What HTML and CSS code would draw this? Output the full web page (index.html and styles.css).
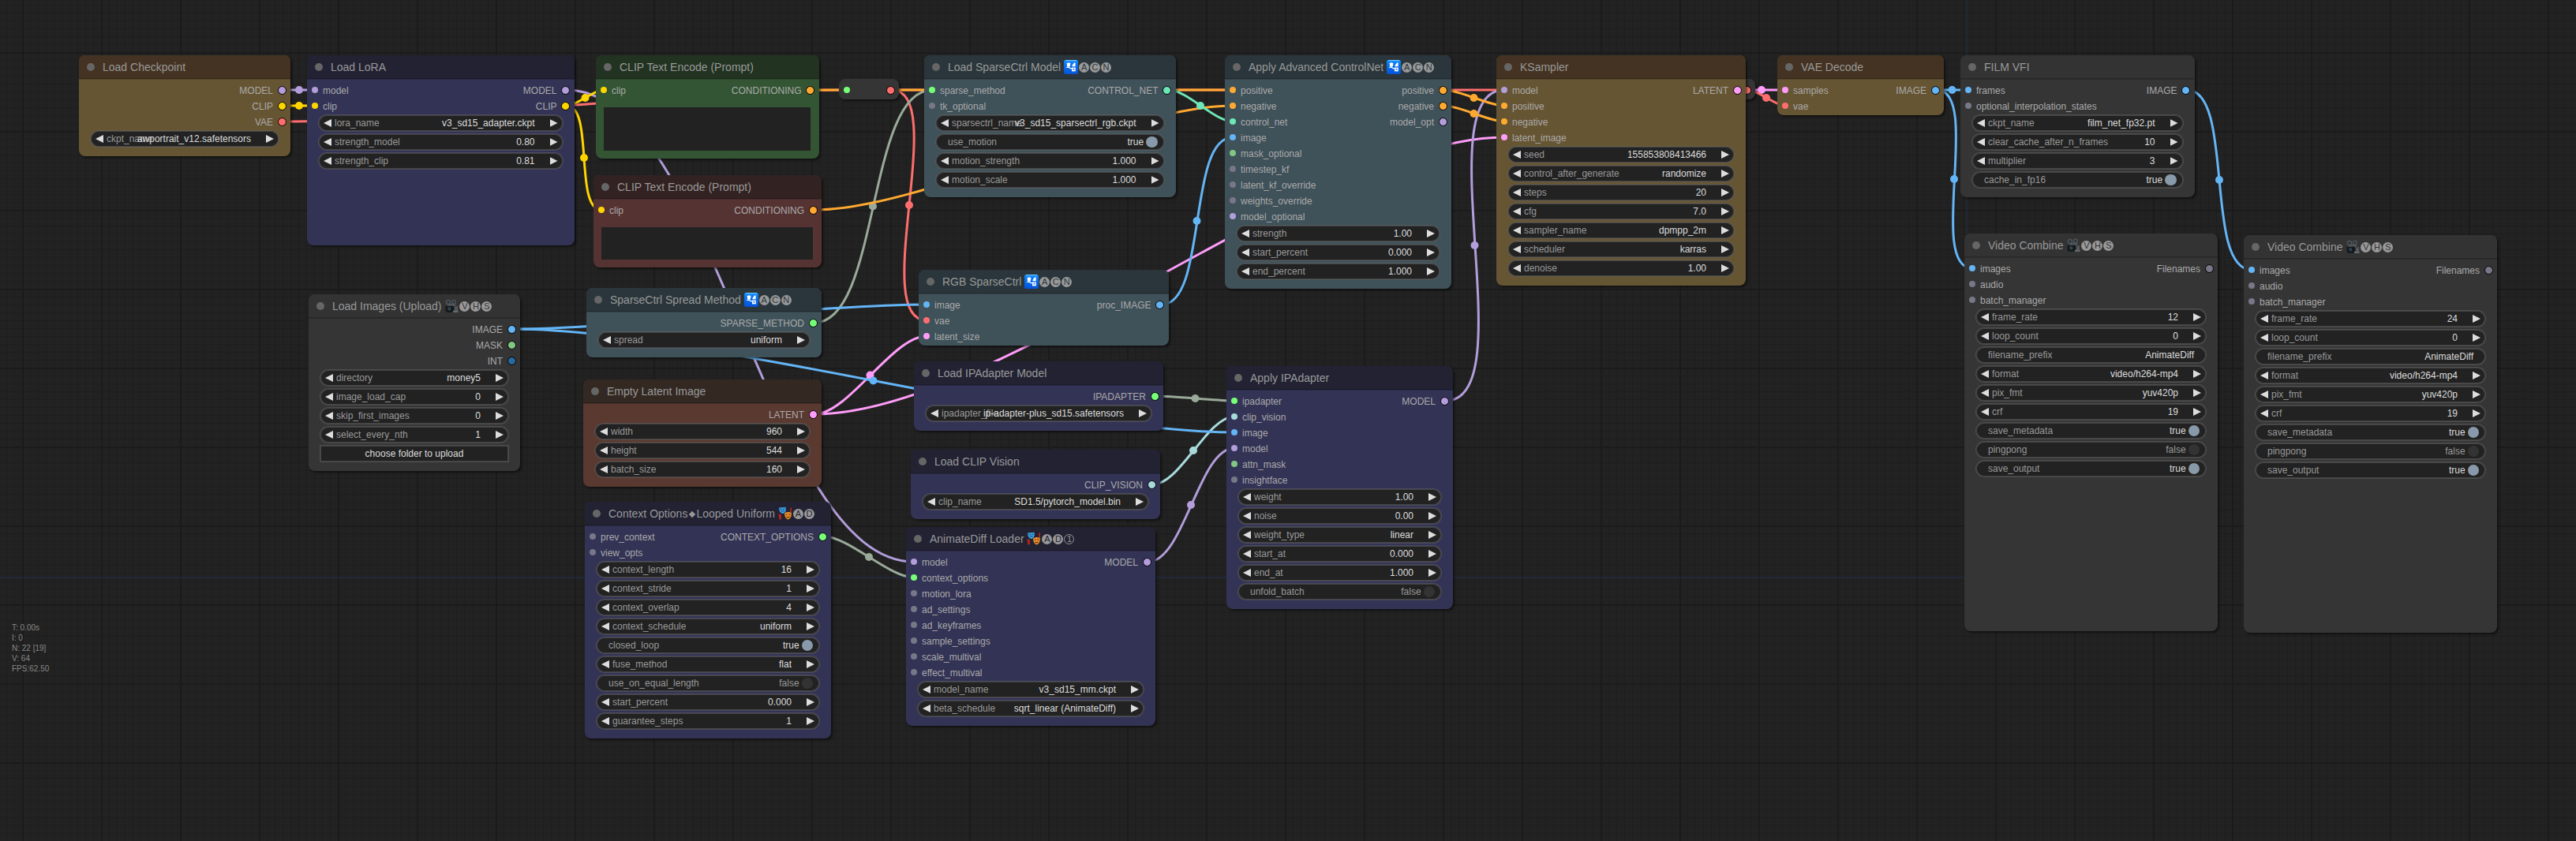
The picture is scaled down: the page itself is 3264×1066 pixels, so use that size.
FILE: index.html
```html
<!DOCTYPE html>
<html lang="en">
<head>
<meta charset="utf-8">
<title>Node graph</title>
<link rel="stylesheet" href="styles.css">
</head>
<body>
<svg class="defs" width="0" height="0" aria-hidden="true">
  <linearGradient id="g-blue" x2="0" y2="1"><stop offset="0" stop-color="#1d9bff"/><stop offset=".25" stop-color="#0a78f5"/><stop offset="1" stop-color="#0453d8"/></linearGradient>
  <symbol id="passport" viewBox="0 0 18 18">
    <rect width="18" height="18" rx="2.5" fill="url(#g-blue)"/>
    <path d="M2 .6h14" stroke="#7cc8ff" stroke-width="1"/>
    <path d="M3.4 4.2l2.6-.9 2.6.9-.5 1.5v1.2c0 1-.9 1.9-2.1 1.9s-2.1-.9-2.1-1.9V5.700z" fill="#fff"/>
    <path d="M3.200 9.300h3.400l1.400 1.400h2.400" stroke="#fff" stroke-width="1.300" fill="none"/>
    <path d="M10.600 6.800l2.400-3.200h1.600v4.600h-4z" fill="#fff"/>
    <rect x="10" y="9.600" width="4.800" height="4.800" fill="#fff"/>
    <circle cx="12.400" cy="11.800" r="1" fill="#1a6be8"/>
  </symbol>
  <symbol id="camera" viewBox="0 0 18 18">
    <circle cx="5" cy="4" r="3.300" fill="#4c5257"/><circle cx="12" cy="3.600" r="3" fill="#4c5257"/>
    <circle cx="5" cy="4" r="1.500" fill="#252a2e"/><circle cx="12" cy="3.600" r="1.400" fill="#252a2e"/>
    <path d="M3.500 6.500l10-1 1 3.500-9 2z" fill="#51565a"/>
    <path d="M1.500 9l10-.6 1 8-8.500.6-2.500-2z" fill="#14181b"/>
    <path d="M4 10.500l4-.3.400 4-3.600.3z" fill="#2d4350"/>
    <path d="M13 10.500l4-2v7l-4-1.500z" fill="#53585c"/>
    <path d="M11 14.500h6.500v2.500H11z" fill="#656a6e"/>
  </symbol>
  <symbol id="masks" viewBox="0 0 18 18">
    <path d="M1 9.500c1.500 2 0 4.500 1.500 7M3 10c.6 2-.6 3.500.4 6M16 1.500c1 2-1 3.500.4 5.500" stroke="#b3261a" stroke-width="1.700" fill="none"/>
    <path d="M1.200 1.500l8.300-.8c1 4.300-.5 7.600-3.500 8.300C2.800 8.600 1 5.800 1.200 1.500z" fill="#3d9fe0"/>
    <path d="M2.700 3.800l2-.3M6.300 3.300l1.900-.2M4 6.400c1.200-.9 2.400-1 3.600-.3" stroke="#123c66" stroke-width="1" fill="none"/>
    <path d="M8.200 8.300c2.800-1.600 5.600-1.800 8.600-.6.400 4.400-1.200 7.900-4.200 8.700-3.100-.8-4.700-4-4.400-8.100z" fill="#e98f2b"/>
    <path d="M9.700 10.300l2-.3M13.400 9.900l2 .2M10.600 13c1.400 1.200 2.700 1.200 4-.1" stroke="#6b2c08" stroke-width="1.100" fill="none"/>
  </symbol>
</svg>

<main class="canvas">
  <svg class="links" width="3264" height="1066" viewBox="0 0 3264 1066">
    <path class="edge" d="M0 732H2492V0"/>
    <g class="t-model"><path d="M359 114H399"/><circle cx="379" cy="114" r="5"/>
      <path d="M718 114C904 114 972 712 1158 712"/>
      <path d="M1455 712C1500 712 1519 568 1564 568"/><circle cx="1509" cy="640" r="5"/></g>
    <g class="t-clip"><path d="M359 134H399"/><circle cx="379" cy="134" r="5"/>
      <path d="M718 134C753 134 727 266 762 266"/><circle cx="740" cy="200" r="5"/></g>
    <g class="t-vae"><path d="M359 154C538 154 894 114 1073 114"/>
      <path d="M1130 114H2158"/>
      <path d="M1130 114C1204 114 1100 406 1174 406"/><circle cx="1152" cy="260" r="5"/></g>
    <g class="t-clip"><path d="M718 134C731 134 752 114 765 114"/><circle cx="741.500" cy="124" r="5"/></g>
    <g class="t-custom"><path d="M1032 409C1115 409 1098 114 1181 114"/><circle cx="1106" cy="261.500" r="5"/>
      <path d="M1044 680C1075 680 1127 732 1158 732"/><circle cx="1101" cy="706" r="5"/>
      <path d="M1465 502C1490 502 1539 508 1564 508"/><circle cx="1514.500" cy="505" r="5"/></g>
    <g class="t-latent"><path d="M1032 525C1267 525 1671 174 1906 174"/>
      <path d="M1032 525C1075 525 1131 426 1174 426"/><circle cx="1102.500" cy="475.500" r="5"/>
      <path d="M2203 114H2262"/><circle cx="2232" cy="114" r="5"/></g>
    <g class="t-model"><path d="M1832 508C1932 508 1806 114 1906 114"/><circle cx="1868.500" cy="311" r="5"/></g>
    <g class="t-cond"><path d="M1029 114H1562"/>
      <path d="M1032 266C1169 266 1425 134 1562 134"/>
      <path d="M1830 114C1850 114 1886 134 1906 134"/><circle cx="1867.500" cy="124" r="5"/>
      <path d="M1830 134C1850 134 1886 154 1906 154"/><circle cx="1867.500" cy="144" r="5"/></g>
    <g class="t-cvision"><path d="M1461 614C1495 614 1530 528 1564 528"/><circle cx="1512" cy="571" r="5"/></g>
    <g class="t-cnet"><path d="M1481 114C1504 114 1539 154 1562 154"/><circle cx="1521" cy="134" r="5"/></g>
    <g class="t-image"><path d="M650 417C781 417 1043 386 1174 386"/>
      <path d="M650 417C881 417 1333 548 1564 548"/><circle cx="1106.500" cy="482.500" r="5"/>
      <path d="M1472 386C1530 386 1504 174 1562 174"/><circle cx="1516.500" cy="280" r="5"/>
      <path d="M2454 114H2494"/><circle cx="2473.500" cy="114" r="5"/>
      <path d="M2454 114C2512 114 2441 340 2499 340"/><circle cx="2476" cy="227" r="5"/>
      <path d="M2771 114C2832 114 2792 342 2853 342"/><circle cx="2812" cy="228" r="5"/></g>
    <g class="t-vae"><path d="M2215 114C2228 114 2249 134 2262 134"/><circle cx="2238" cy="124" r="5"/></g>
  </svg>

  <section class="node gold n-checkpoint">
    <header>Load Checkpoint</header>
    <div class="slots"><ul class="out"><li class="c-model">MODEL</li><li class="c-clip">CLIP</li><li class="c-vae">VAE</li></ul></div>
    <div class="widgets"><div class="w"><span>ckpt_name</span><b>awportrait_v12.safetensors</b></div></div>
  </section>

  <section class="node blue n-lora">
    <header>Load LoRA</header>
    <div class="slots"><ul class="in"><li class="c-model">model</li><li class="c-clip">clip</li></ul><ul class="out"><li class="c-model">MODEL</li><li class="c-clip">CLIP</li></ul></div>
    <div class="widgets">
      <div class="w"><span>lora_name</span><b>v3_sd15_adapter.ckpt</b></div>
      <div class="w"><span>strength_model</span><b>0.80</b></div>
      <div class="w"><span>strength_clip</span><b>0.81</b></div>
    </div>
  </section>

  <section class="node green n-positive">
    <header>CLIP Text Encode (Prompt)</header>
    <div class="slots"><ul class="in"><li class="c-clip">clip</li></ul><ul class="out"><li class="c-cond">CONDITIONING</li></ul></div>
    <div class="prompt"></div>
  </section>

  <section class="node red n-negative">
    <header>CLIP Text Encode (Prompt)</header>
    <div class="slots"><ul class="in"><li class="c-clip">clip</li></ul><ul class="out"><li class="c-cond">CONDITIONING</li></ul></div>
    <div class="prompt"></div>
  </section>

  <section class="node reroute n-reroute1">
    <div class="slots"><ul class="in"><li class="c-on"></li></ul><ul class="out"><li class="c-vae"></li></ul></div>
  </section>
  <section class="node reroute n-reroute2">
    <div class="slots"><ul class="in"><li class="c-on"></li></ul><ul class="out"><li class="c-vae"></li></ul></div>
  </section>

  <section class="node pale n-sparse">
    <header>Load SparseCtrl Model <svg class="emoji"><use href="#passport"/></svg><i>A</i><i>C</i><i>N</i></header>
    <div class="slots"><ul class="in"><li class="c-on">sparse_method</li><li>tk_optional</li></ul><ul class="out"><li class="c-cnet">CONTROL_NET</li></ul></div>
    <div class="widgets">
      <div class="w"><span>sparsectrl_name</span><b>v3_sd15_sparsectrl_rgb.ckpt</b></div>
      <div class="w toggle on"><span>use_motion</span><b>true</b></div>
      <div class="w"><span>motion_strength</span><b>1.000</b></div>
      <div class="w"><span>motion_scale</span><b>1.000</b></div>
    </div>
  </section>

  <section class="node pale n-rgb">
    <header>RGB SparseCtrl <svg class="emoji"><use href="#passport"/></svg><i>A</i><i>C</i><i>N</i></header>
    <div class="slots"><ul class="in"><li class="c-image">image</li><li class="c-vae">vae</li><li class="c-latent">latent_size</li></ul><ul class="out"><li class="c-image">proc_IMAGE</li></ul></div>
  </section>

  <section class="node pale n-acn">
    <header>Apply Advanced ControlNet <svg class="emoji"><use href="#passport"/></svg><i>A</i><i>C</i><i>N</i></header>
    <div class="slots">
      <ul class="in"><li class="c-cond">positive</li><li class="c-cond">negative</li><li class="c-cnet">control_net</li><li class="c-image">image</li><li class="c-mask">mask_optional</li><li>timestep_kf</li><li>latent_kf_override</li><li>weights_override</li><li class="c-model">model_optional</li></ul>
      <ul class="out"><li class="c-cond">positive</li><li class="c-cond">negative</li><li class="c-model">model_opt</li></ul>
    </div>
    <div class="widgets">
      <div class="w"><span>strength</span><b>1.00</b></div>
      <div class="w"><span>start_percent</span><b>0.000</b></div>
      <div class="w"><span>end_percent</span><b>1.000</b></div>
    </div>
  </section>

  <section class="node gold n-ksampler">
    <header>KSampler</header>
    <div class="slots"><ul class="in"><li class="c-model">model</li><li class="c-cond">positive</li><li class="c-cond">negative</li><li class="c-latent">latent_image</li></ul><ul class="out"><li class="c-latent">LATENT</li></ul></div>
    <div class="widgets">
      <div class="w"><span>seed</span><b>155853808413466</b></div>
      <div class="w"><span>control_after_generate</span><b>randomize</b></div>
      <div class="w"><span>steps</span><b>20</b></div>
      <div class="w"><span>cfg</span><b>7.0</b></div>
      <div class="w"><span>sampler_name</span><b>dpmpp_2m</b></div>
      <div class="w"><span>scheduler</span><b>karras</b></div>
      <div class="w"><span>denoise</span><b>1.00</b></div>
    </div>
  </section>

  <section class="node gold n-decode">
    <header>VAE Decode</header>
    <div class="slots"><ul class="in"><li class="c-latent">samples</li><li class="c-vae">vae</li></ul><ul class="out"><li class="c-image">IMAGE</li></ul></div>
  </section>

  <section class="node n-film">
    <header>FILM VFI</header>
    <div class="slots"><ul class="in"><li class="c-image">frames</li><li>optional_interpolation_states</li></ul><ul class="out"><li class="c-image">IMAGE</li></ul></div>
    <div class="widgets">
      <div class="w"><span>ckpt_name</span><b>film_net_fp32.pt</b></div>
      <div class="w"><span>clear_cache_after_n_frames</span><b>10</b></div>
      <div class="w"><span>multiplier</span><b>3</b></div>
      <div class="w toggle on"><span>cache_in_fp16</span><b>true</b></div>
    </div>
  </section>

  <section class="node n-video1">
    <header>Video Combine <svg class="emoji"><use href="#camera"/></svg><i>V</i><i>H</i><i>S</i></header>
    <div class="slots"><ul class="in"><li class="c-image">images</li><li>audio</li><li>batch_manager</li></ul><ul class="out"><li>Filenames</li></ul></div>
    <div class="widgets">
      <div class="w"><span>frame_rate</span><b>12</b></div>
      <div class="w"><span>loop_count</span><b>0</b></div>
      <div class="w text"><span>filename_prefix</span><b>AnimateDiff</b></div>
      <div class="w"><span>format</span><b>video/h264-mp4</b></div>
      <div class="w"><span>pix_fmt</span><b>yuv420p</b></div>
      <div class="w"><span>crf</span><b>19</b></div>
      <div class="w toggle on"><span>save_metadata</span><b>true</b></div>
      <div class="w toggle"><span>pingpong</span><b>false</b></div>
      <div class="w toggle on"><span>save_output</span><b>true</b></div>
    </div>
  </section>

  <section class="node n-video2">
    <header>Video Combine <svg class="emoji"><use href="#camera"/></svg><i>V</i><i>H</i><i>S</i></header>
    <div class="slots"><ul class="in"><li class="c-image">images</li><li>audio</li><li>batch_manager</li></ul><ul class="out"><li>Filenames</li></ul></div>
    <div class="widgets">
      <div class="w"><span>frame_rate</span><b>24</b></div>
      <div class="w"><span>loop_count</span><b>0</b></div>
      <div class="w text"><span>filename_prefix</span><b>AnimateDiff</b></div>
      <div class="w"><span>format</span><b>video/h264-mp4</b></div>
      <div class="w"><span>pix_fmt</span><b>yuv420p</b></div>
      <div class="w"><span>crf</span><b>19</b></div>
      <div class="w toggle on"><span>save_metadata</span><b>true</b></div>
      <div class="w toggle"><span>pingpong</span><b>false</b></div>
      <div class="w toggle on"><span>save_output</span><b>true</b></div>
    </div>
  </section>

  <section class="node n-images">
    <header>Load Images (Upload) <svg class="emoji"><use href="#camera"/></svg><i>V</i><i>H</i><i>S</i></header>
    <div class="slots"><ul class="out"><li class="c-image">IMAGE</li><li class="c-mask">MASK</li><li class="c-int">INT</li></ul></div>
    <div class="widgets">
      <div class="w"><span>directory</span><b>money5</b></div>
      <div class="w"><span>image_load_cap</span><b>0</b></div>
      <div class="w"><span>skip_first_images</span><b>0</b></div>
      <div class="w"><span>select_every_nth</span><b>1</b></div>
      <div class="w button">choose folder to upload</div>
    </div>
  </section>

  <section class="node pale n-spread">
    <header>SparseCtrl Spread Method <svg class="emoji"><use href="#passport"/></svg><i>A</i><i>C</i><i>N</i></header>
    <div class="slots"><ul class="out"><li class="c-on">SPARSE_METHOD</li></ul></div>
    <div class="widgets"><div class="w"><span>spread</span><b>uniform</b></div></div>
  </section>

  <section class="node brown n-latent">
    <header>Empty Latent Image</header>
    <div class="slots"><ul class="out"><li class="c-latent">LATENT</li></ul></div>
    <div class="widgets">
      <div class="w"><span>width</span><b>960</b></div>
      <div class="w"><span>height</span><b>544</b></div>
      <div class="w"><span>batch_size</span><b>160</b></div>
    </div>
  </section>

  <section class="node blue n-context">
    <header>Context Options<em></em>Looped Uniform <svg class="emoji"><use href="#masks"/></svg><i>A</i><i>D</i></header>
    <div class="slots"><ul class="in"><li>prev_context</li><li>view_opts</li></ul><ul class="out"><li class="c-on">CONTEXT_OPTIONS</li></ul></div>
    <div class="widgets">
      <div class="w"><span>context_length</span><b>16</b></div>
      <div class="w"><span>context_stride</span><b>1</b></div>
      <div class="w"><span>context_overlap</span><b>4</b></div>
      <div class="w"><span>context_schedule</span><b>uniform</b></div>
      <div class="w toggle on"><span>closed_loop</span><b>true</b></div>
      <div class="w"><span>fuse_method</span><b>flat</b></div>
      <div class="w toggle"><span>use_on_equal_length</span><b>false</b></div>
      <div class="w"><span>start_percent</span><b>0.000</b></div>
      <div class="w"><span>guarantee_steps</span><b>1</b></div>
    </div>
  </section>

  <section class="node blue n-ipmodel">
    <header>Load IPAdapter Model</header>
    <div class="slots"><ul class="out"><li class="c-on">IPADAPTER</li></ul></div>
    <div class="widgets"><div class="w"><span>ipadapter_file</span><b>ip-adapter-plus_sd15.safetensors</b></div></div>
  </section>

  <section class="node blue n-clipvision">
    <header>Load CLIP Vision</header>
    <div class="slots"><ul class="out"><li class="c-cvision">CLIP_VISION</li></ul></div>
    <div class="widgets"><div class="w"><span>clip_name</span><b>SD1.5/pytorch_model.bin</b></div></div>
  </section>

  <section class="node blue n-animdiff">
    <header>AnimateDiff Loader <svg class="emoji"><use href="#masks"/></svg><i>A</i><i>D</i><i class="hollow">1</i></header>
    <div class="slots">
      <ul class="in"><li class="c-model">model</li><li class="c-on">context_options</li><li>motion_lora</li><li>ad_settings</li><li>ad_keyframes</li><li>sample_settings</li><li>scale_multival</li><li>effect_multival</li></ul>
      <ul class="out"><li class="c-model">MODEL</li></ul>
    </div>
    <div class="widgets">
      <div class="w"><span>model_name</span><b>v3_sd15_mm.ckpt</b></div>
      <div class="w"><span>beta_schedule</span><b>sqrt_linear (AnimateDiff)</b></div>
    </div>
  </section>

  <section class="node blue n-ipadapter">
    <header>Apply IPAdapter</header>
    <div class="slots">
      <ul class="in"><li class="c-on">ipadapter</li><li class="c-cvision">clip_vision</li><li class="c-image">image</li><li class="c-model">model</li><li class="c-mask">attn_mask</li><li>insightface</li></ul>
      <ul class="out"><li class="c-model">MODEL</li></ul>
    </div>
    <div class="widgets">
      <div class="w"><span>weight</span><b>1.00</b></div>
      <div class="w"><span>noise</span><b>0.00</b></div>
      <div class="w"><span>weight_type</span><b>linear</b></div>
      <div class="w"><span>start_at</span><b>0.000</b></div>
      <div class="w"><span>end_at</span><b>1.000</b></div>
      <div class="w toggle"><span>unfold_batch</span><b>false</b></div>
    </div>
  </section>

  <ul class="stats"><li>T: 0.00s</li><li>I: 0</li><li>N: 22 [19]</li><li>V: 64</li><li>FPS:62.50</li></ul>
</main>
</body>
</html>
```
FILE: styles.css
```css
* { box-sizing: border-box; }
body { margin: 0; background: #222; font: 12px/20px "Liberation Sans", Arial, sans-serif; overflow: hidden; }
ul { list-style: none; margin: 0; padding: 0; }
.defs { position: absolute; }

/* canvas and grid */
.canvas {
  position: relative; width: 3264px; height: 1066px; overflow: hidden;
  background-color: #222;
  background-image:
    linear-gradient(90deg, #1b1b1b 2px, transparent 2px),
    linear-gradient(#1b1b1b 2px, transparent 2px),
    linear-gradient(90deg, #1e1e1e 1px, transparent 1px),
    linear-gradient(#1e1e1e 1px, transparent 1px);
  background-size: 100px 100px, 100px 100px, 10px 10px, 10px 10px;
  background-position: 28px 0, 0 66px, 8px 0, 0 6px;
}

/* links */
.links { position: absolute; inset: 0; }
.links path { fill: none; stroke-width: 3; }
.links .edge { stroke: #235; stroke-width: 2; opacity: .45; }
.t-model { stroke: #b39ddb; fill: #b39ddb; }
.t-clip { stroke: #ffd500; fill: #ffd500; }
.t-vae { stroke: #ff6e6e; fill: #ff6e6e; }
.t-custom { stroke: #9a9; fill: #9a9; }
.t-cond { stroke: #ffa931; fill: #ffa931; }
.t-cnet { stroke: #6ee7b7; fill: #6ee7b7; }
.t-image { stroke: #64b5f6; fill: #64b5f6; }
.t-latent { stroke: #ff9cf9; fill: #ff9cf9; }
.t-cvision { stroke: #a8dadc; fill: #a8dadc; }
.links circle { stroke: none; }

/* nodes */
.node {
  --head: #333; --body: #353535;
  position: absolute; display: flex; flex-direction: column;
  background: var(--body); border-radius: 8px; box-shadow: 2px 2px 3px rgba(0, 0, 0, .5);
}
.gold { --head: #432; --body: #653; }
.blue { --head: #223; --body: #335; }
.green { --head: #232; --body: #353; }
.red { --head: #322; --body: #533; }
.pale { --head: #2a363b; --body: #3f5159; }
.brown { --head: #332922; --body: #593930; }

.node header {
  flex: none; display: flex; align-items: center; height: 30px; padding-left: 10px;
  background: var(--head); border-radius: 8px 8px 0 0; color: #999; font-size: 14px; line-height: 30px;
  white-space: pre; box-shadow: inset 0 -1px rgba(0, 0, 0, .2), 0 1px rgba(0, 0, 0, .2);
}
.node header::before { content: ""; width: 10px; height: 10px; margin-right: 10px; border-radius: 50%; background: #666; }
.emoji { width: 18px; height: 18px; margin-right: 1px; flex: none; }
.node header i {
  display: grid; place-items: center; width: 13px; height: 13px; margin-right: 1px; border-radius: 50%;
  background: #999; color: var(--head); font: 11px/13px "Liberation Sans", Arial, sans-serif;
}
.node header i.hollow { background: none; color: #999; border: 1px solid #999; line-height: 11px; }
.node header em { width: 6px; height: 6px; margin: 1px 2.500px 0; background: #999; transform: rotate(45deg); }

.slots { display: flex; justify-content: space-between; padding: 4px 0 2px; color: #aaa; }
.slots li { display: flex; align-items: center; height: 20px; padding-top: 2px; line-height: 18px; --dot: #778; }
.slots li::before { content: ""; flex: none; width: 8px; height: 8px; margin: -2px 6px 0; border-radius: 50%; background: var(--dot); }
.out { margin-left: auto; }
.slots .out li { flex-direction: row-reverse; }
.slots .out li::before { width: 9px; height: 9px; margin: -2px 5.500px 0; border: 1px solid #000; }
.slots .c-model { --dot: #b39ddb; }
.slots .c-clip { --dot: #ffd500; }
.slots .c-vae { --dot: #ff6e6e; }
.slots .c-cond { --dot: #ffa931; }
.slots .c-cnet { --dot: #6ee7b7; }
.slots .c-image { --dot: #64b5f6; }
.slots .c-latent { --dot: #ff9cf9; }
.slots .c-cvision { --dot: #a8dadc; }
.slots .c-mask { --dot: #81c784; }
.slots .c-int { --dot: #29699c; }
.slots .c-on { --dot: #7f7; }

/* widgets */
.widgets { display: flex; flex-direction: column; gap: 4px; padding: 0 15px; }
.w {
  display: flex; align-items: center; height: 20px; padding: 0 6px; border-radius: 10px;
  background: #222; color: #ddd; white-space: nowrap;
  box-shadow: 0 0 0 1px rgba(102, 102, 102, .5), inset 0 0 0 1px rgba(102, 102, 102, .5);
}
.w span { flex: 1 1 0; min-width: 0; color: #999; }
.w b { flex: none; font-weight: normal; }
.w::before, .w::after { content: ""; flex: none; width: 10px; height: 10px; background: #ddd; }
.w::before { margin-right: 4px; clip-path: polygon(100% 0, 0 50%, 100% 100%); }
.w::after { margin-left: 19px; clip-path: polygon(0 0, 100% 50%, 0 100%); }
.toggle, .text { padding: 0 15px; }
.toggle::before, .text::before, .text::after, .button::before, .button::after { display: none; }
.toggle { padding-right: 8px; }
.toggle b { color: #999; }
.toggle.on b { color: #ddd; }
.toggle::after { width: 14.400px; height: 14.400px; margin-left: 3px; border-radius: 50%; clip-path: none; background: #333; }
.toggle.on::after { background: #89a; }
.button { justify-content: center; border-radius: 0; }
.prompt { flex: 1; margin: 10px 11px 10px 10px; background: #222; }

/* positions on the canvas */
.n-checkpoint { left: 100px; top: 70px; width: 268px; height: 128px; }
.n-lora { left: 389px; top: 70px; width: 338.500px; height: 241px; }
.n-positive { left: 755px; top: 70px; width: 282.500px; height: 131px; }
.n-negative { left: 752px; top: 222px; width: 289px; height: 117px; }
.n-reroute1 { left: 1063px; top: 100px; width: 76px; height: 26px; }
.n-reroute2 { left: 2148px; top: 100px; width: 76px; height: 26px; }
.n-sparse { left: 1171px; top: 70px; width: 318.500px; height: 180px; }
.n-rgb { left: 1164px; top: 342px; width: 316.500px; height: 96px; }
.n-acn { left: 1552px; top: 70px; width: 287px; height: 296px; }
.n-ksampler { left: 1896px; top: 70px; width: 316px; height: 292px; }
.n-decode { left: 2252px; top: 70px; width: 211px; height: 76px; }
.n-film { left: 2484px; top: 70px; width: 296.500px; height: 180px; }
.n-video1 { left: 2489px; top: 296px; width: 321px; height: 504px; }
.n-video2 { left: 2843px; top: 298px; width: 321px; height: 504px; }
.n-images { left: 391px; top: 373px; width: 268px; height: 224px; }
.n-spread { left: 743px; top: 365px; width: 298px; height: 88px; }
.n-latent { left: 739px; top: 481px; width: 302px; height: 136px; }
.n-context { left: 741px; top: 636px; width: 312px; height: 300px; }
.n-ipmodel { left: 1158px; top: 458px; width: 316px; height: 88px; }
.n-clipvision { left: 1154px; top: 570px; width: 316px; height: 88px; }
.n-animdiff { left: 1148px; top: 668px; width: 316px; height: 252px; }
.n-ipadapter { left: 1554px; top: 464px; width: 287px; height: 308px; }

.stats { position: absolute; left: 15px; top: 789px; color: #888; font-size: 10px; line-height: 13px; }
```
